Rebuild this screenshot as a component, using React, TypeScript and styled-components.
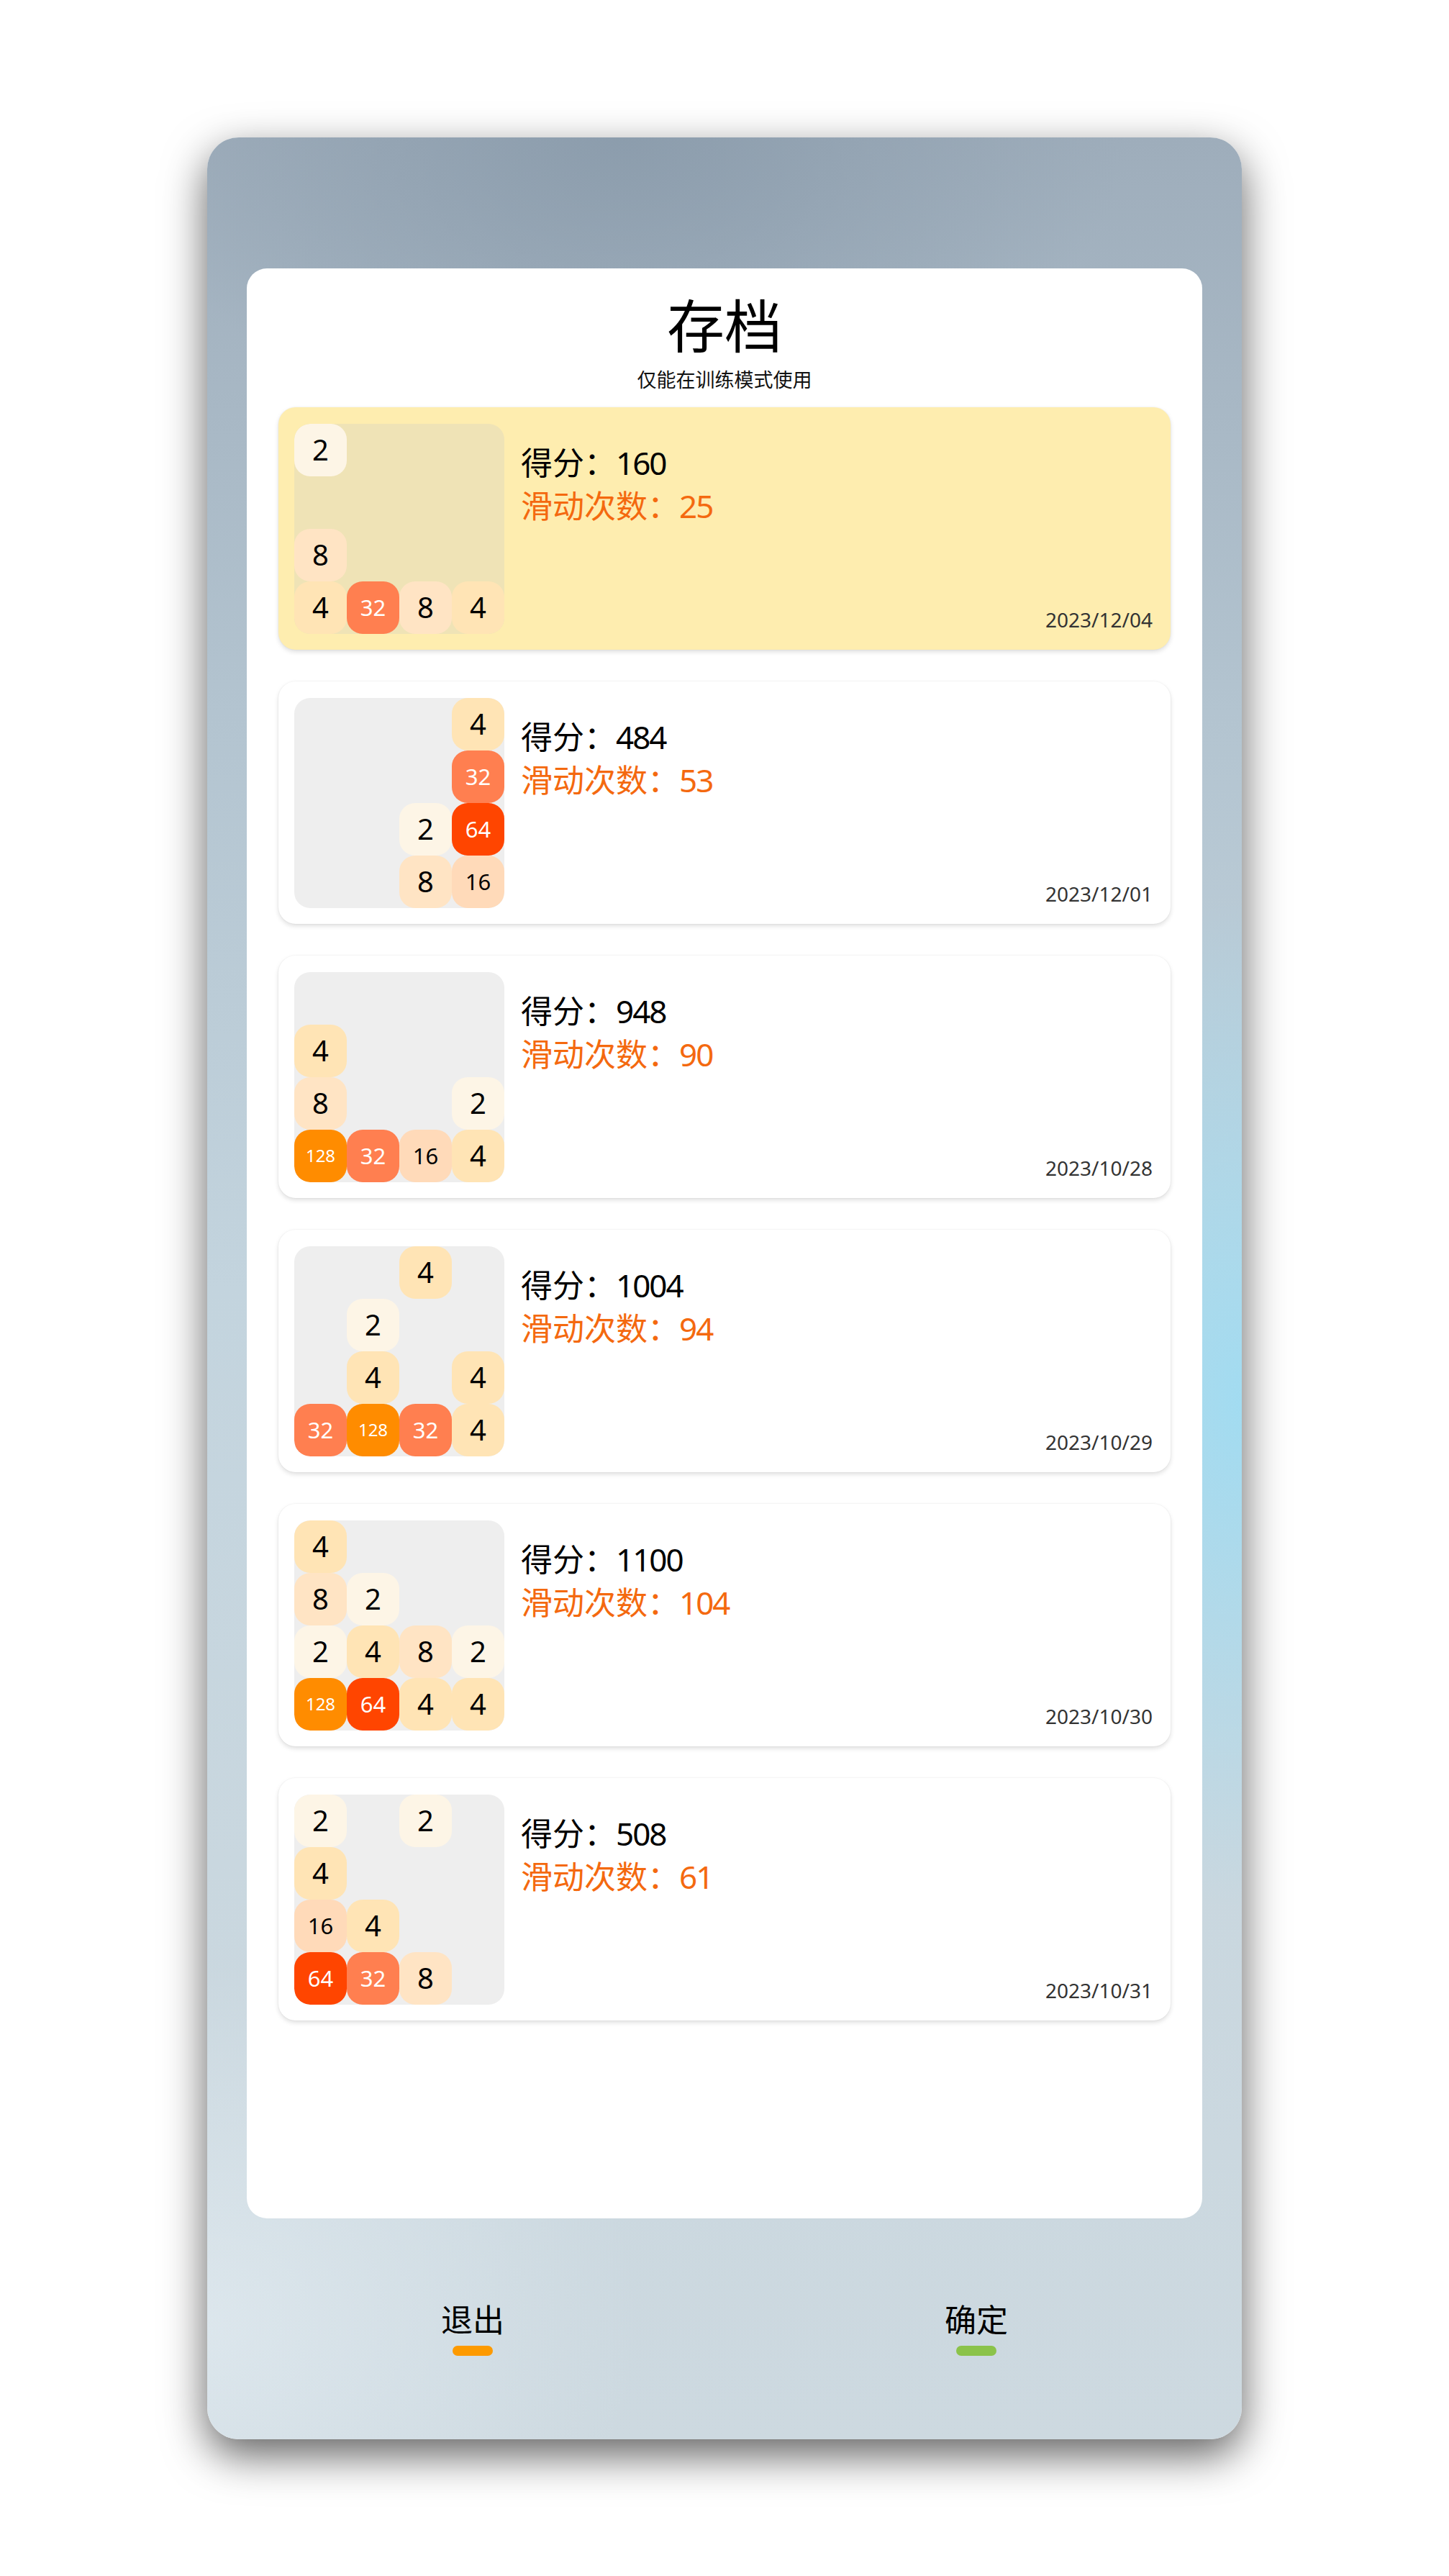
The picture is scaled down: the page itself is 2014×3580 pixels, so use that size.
import React from "react";
import styled, { createGlobalStyle } from "styled-components";

const Global = createGlobalStyle`
  html, body { margin: 0; padding: 0; background: #ffffff; }
  body { font-family: "Noto Sans", "Noto Sans CJK SC", sans-serif; }
`;

const Page = styled.div`
  width: 2014px;
  height: 3580px;
  display: flex;
  align-items: center;
  justify-content: center;
`;

const Phone = styled.div`
  width: 1438px;
  height: 3199px;
  box-sizing: border-box;
  border-radius: 44px;
  padding: 182px 55px 0;
  display: flex;
  flex-direction: column;
  box-shadow: 0 22px 60px rgba(0, 0, 0, 0.62);
  background:
    radial-gradient(ellipse 380px 700px at 100% 55%, rgba(160, 220, 242, 0.95), rgba(160, 220, 242, 0) 100%),
    radial-gradient(ellipse 700px 420px at 40% 0%, rgba(138, 155, 171, 0.9), rgba(138, 155, 171, 0) 100%),
    radial-gradient(ellipse 600px 500px at 0% 95%, rgba(222, 232, 238, 0.9), rgba(222, 232, 238, 0) 100%),
    linear-gradient(180deg, #9eadbb 0%, #b3c4d0 25%, #c3d4de 50%, #c9d7df 75%, #cdd9e0 100%);
`;

const Panel = styled.div`
  height: 2710px;
  box-sizing: border-box;
  background: #ffffff;
  border-radius: 28px;
  padding: 31px 44px 0;
  display: flex;
  flex-direction: column;
`;

const Title = styled.h1`
  margin: 0;
  text-align: center;
  font-size: 80px;
  line-height: 96px;
  font-weight: 400;
  color: #000;
`;

const Subtitle = styled.div`
  margin-top: 10px;
  text-align: center;
  font-size: 27px;
  line-height: 36px;
  color: #111;
`;

const List = styled.div`
  margin-top: 20px;
  display: flex;
  flex-direction: column;
  gap: 44px;
`;

const Card = styled.div<{ $active?: boolean }>`
  height: 337px;
  box-sizing: border-box;
  border-radius: 24px;
  padding: 23px 25px 22px 22px;
  background: ${(p) => (p.$active ? "#feedaf" : "#ffffff")};
  box-shadow: 0 3px 6px rgba(0, 0, 0, 0.13), 0 0 0 1px rgba(0, 0, 0, 0.025);
  display: flex;
  gap: 23px;
`;

const Board = styled.div<{ $active?: boolean }>`
  width: 292px;
  height: 292px;
  flex: none;
  border-radius: 22px;
  background: ${(p) => (p.$active ? "#efe3b6" : "#eeeeee")};
  display: grid;
  grid-template-columns: repeat(4, 73px);
  grid-template-rows: repeat(4, 73px);
  overflow: hidden;
`;

const tileColors: Record<number, string> = {
  2: "#fdf5e6",
  4: "#ffe4b5",
  8: "#ffe4c4",
  16: "#ffdab9",
  32: "#ff7f50",
  64: "#ff4500",
  128: "#ff8c00",
};

const Tile = styled.div<{ $v: number }>`
  border-radius: 22px;
  display: flex;
  align-items: center;
  justify-content: center;
  background: ${(p) => (p.$v ? tileColors[p.$v] : "transparent")};
  color: ${(p) => (p.$v >= 32 ? "#ffffff" : "#000000")};
  font-size: ${(p) => (p.$v >= 100 ? 24 : p.$v >= 10 ? 31 : 40)}px;
  line-height: 1;
`;

const Info = styled.div`
  flex: 1;
  display: flex;
  flex-direction: column;
  padding-top: 24px;
`;

const Score = styled.div`
  font-size: 44px;
  line-height: 60px;
  color: #000;
`;

const Moves = styled.div`
  font-size: 44px;
  line-height: 60px;
  color: #f4690f;
`;

const Num = styled.span`
  letter-spacing: -2px;
`;

const DateText = styled.div`
  margin-top: auto;
  align-self: flex-end;
  font-size: 28px;
  line-height: 36px;
  color: #333;
  padding-bottom: 2px;
`;

const Footer = styled.div`
  flex: 1;
  display: flex;
  align-items: center;
  justify-content: space-between;
  padding: 0 270px 4px;
`;

const Button = styled.div`
  width: 88px;
  display: flex;
  flex-direction: column;
  align-items: center;
  gap: 6px;
`;

const ButtonLabel = styled.div`
  font-size: 44px;
  line-height: 60px;
  color: #000;
  white-space: nowrap;
`;

const Bar = styled.div<{ $color: string }>`
  width: 56px;
  height: 14px;
  border-radius: 7px;
  background: ${(p) => p.$color};
`;

type Save = {
  board: number[][];
  score: number;
  moves: number;
  date: string;
  active?: boolean;
};

const saves: Save[] = [
  {
    board: [
      [2, 0, 0, 0],
      [0, 0, 0, 0],
      [8, 0, 0, 0],
      [4, 32, 8, 4],
    ],
    score: 160,
    moves: 25,
    date: "2023/12/04",
    active: true,
  },
  {
    board: [
      [0, 0, 0, 4],
      [0, 0, 0, 32],
      [0, 0, 2, 64],
      [0, 0, 8, 16],
    ],
    score: 484,
    moves: 53,
    date: "2023/12/01",
  },
  {
    board: [
      [0, 0, 0, 0],
      [4, 0, 0, 0],
      [8, 0, 0, 2],
      [128, 32, 16, 4],
    ],
    score: 948,
    moves: 90,
    date: "2023/10/28",
  },
  {
    board: [
      [0, 0, 4, 0],
      [0, 2, 0, 0],
      [0, 4, 0, 4],
      [32, 128, 32, 4],
    ],
    score: 1004,
    moves: 94,
    date: "2023/10/29",
  },
  {
    board: [
      [4, 0, 0, 0],
      [8, 2, 0, 0],
      [2, 4, 8, 2],
      [128, 64, 4, 4],
    ],
    score: 1100,
    moves: 104,
    date: "2023/10/30",
  },
  {
    board: [
      [2, 0, 2, 0],
      [4, 0, 0, 0],
      [16, 4, 0, 0],
      [64, 32, 8, 0],
    ],
    score: 508,
    moves: 61,
    date: "2023/10/31",
  },
];

export default function App() {
  return (
    <>
      <Global />
      <Page>
        <Phone>
          <Panel>
            <Title>存档</Title>
            <Subtitle>仅能在训练模式使用</Subtitle>
            <List>
              {saves.map((s, i) => (
                <Card key={i} $active={s.active}>
                  <Board $active={s.active}>
                    {s.board.flat().map((v, j) => (
                      <Tile key={j} $v={v}>
                        {v ? v : ""}
                      </Tile>
                    ))}
                  </Board>
                  <Info>
                    <Score>
                      得分：<Num>{s.score}</Num>
                    </Score>
                    <Moves>
                      滑动次数：<Num>{s.moves}</Num>
                    </Moves>
                    <DateText>{s.date}</DateText>
                  </Info>
                </Card>
              ))}
            </List>
          </Panel>
          <Footer>
            <Button>
              <ButtonLabel>退出</ButtonLabel>
              <Bar $color="#fd9a00" />
            </Button>
            <Button>
              <ButtonLabel>确定</ButtonLabel>
              <Bar $color="#8bc34a" />
            </Button>
          </Footer>
        </Phone>
      </Page>
    </>
  );
}
